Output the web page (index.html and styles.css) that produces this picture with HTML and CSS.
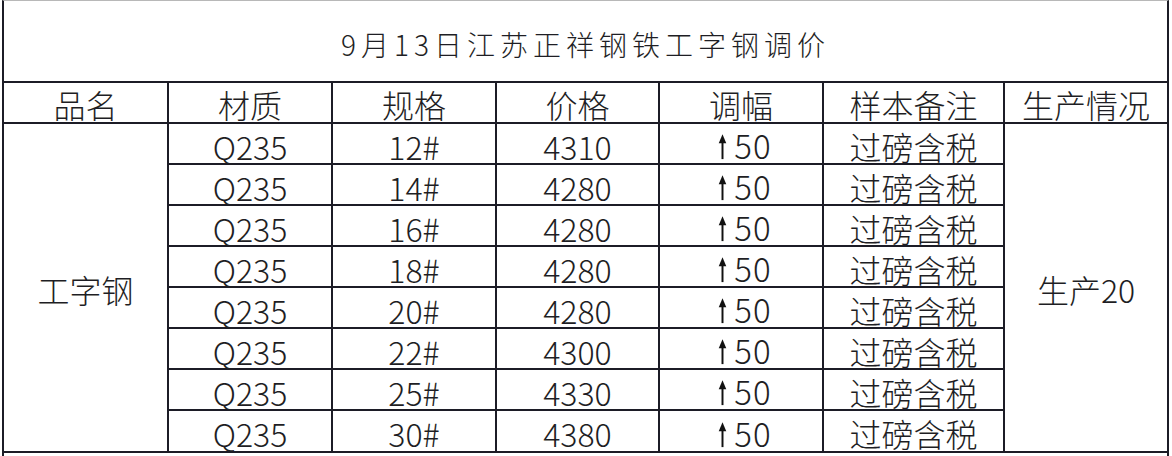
FILE: index.html
```html
<!DOCTYPE html>
<html lang="zh-CN">
<head>
<meta charset="utf-8">
<title>9月13日江苏正祥钢铁工字钢调价</title>
<link rel="stylesheet" href="styles.css">
</head>
<body>
<div class="frame">
  <div class="table-wrap">
    <table class="price">
      <colgroup>
        <col class="c1"><col class="c2"><col class="c3"><col class="c4"><col class="c5"><col class="c6"><col class="c7">
      </colgroup>
      <tr class="title-row"><td colspan="7" class="title">9月13日江苏正祥钢铁工字钢调价</td></tr>
      <tr class="head-row">
        <td>品名</td><td>材质</td><td>规格</td><td>价格</td><td>调幅</td><td>样本备注</td><td>生产情况</td>
      </tr>
      <tr class="row">
        <td rowspan="8" class="merged">工字钢</td>
        <td>Q235</td><td>12#</td><td>4310</td>
        <td><span class="chg"><svg class="up" viewBox="0 0 10 28" width="9" height="27"><path d="M5 8V28" stroke="#111" stroke-width="2.2"/><path d="M0.8 10.5L5 0.5L9.2 10.5Z" fill="#111"/></svg><span class="amt">50</span></span></td>
        <td>过磅含税</td>
        <td rowspan="8" class="merged">生产20</td>
      </tr>
      <tr class="row"><td>Q235</td><td>14#</td><td>4280</td><td><span class="chg"><svg class="up" viewBox="0 0 10 28" width="9" height="27"><path d="M5 8V28" stroke="#111" stroke-width="2.2"/><path d="M0.8 10.5L5 0.5L9.2 10.5Z" fill="#111"/></svg><span class="amt">50</span></span></td><td>过磅含税</td></tr>
      <tr class="row"><td>Q235</td><td>16#</td><td>4280</td><td><span class="chg"><svg class="up" viewBox="0 0 10 28" width="9" height="27"><path d="M5 8V28" stroke="#111" stroke-width="2.2"/><path d="M0.8 10.5L5 0.5L9.2 10.5Z" fill="#111"/></svg><span class="amt">50</span></span></td><td>过磅含税</td></tr>
      <tr class="row"><td>Q235</td><td>18#</td><td>4280</td><td><span class="chg"><svg class="up" viewBox="0 0 10 28" width="9" height="27"><path d="M5 8V28" stroke="#111" stroke-width="2.2"/><path d="M0.8 10.5L5 0.5L9.2 10.5Z" fill="#111"/></svg><span class="amt">50</span></span></td><td>过磅含税</td></tr>
      <tr class="row"><td>Q235</td><td>20#</td><td>4280</td><td><span class="chg"><svg class="up" viewBox="0 0 10 28" width="9" height="27"><path d="M5 8V28" stroke="#111" stroke-width="2.2"/><path d="M0.8 10.5L5 0.5L9.2 10.5Z" fill="#111"/></svg><span class="amt">50</span></span></td><td>过磅含税</td></tr>
      <tr class="row"><td>Q235</td><td>22#</td><td>4300</td><td><span class="chg"><svg class="up" viewBox="0 0 10 28" width="9" height="27"><path d="M5 8V28" stroke="#111" stroke-width="2.2"/><path d="M0.8 10.5L5 0.5L9.2 10.5Z" fill="#111"/></svg><span class="amt">50</span></span></td><td>过磅含税</td></tr>
      <tr class="row"><td>Q235</td><td>25#</td><td>4330</td><td><span class="chg"><svg class="up" viewBox="0 0 10 28" width="9" height="27"><path d="M5 8V28" stroke="#111" stroke-width="2.2"/><path d="M0.8 10.5L5 0.5L9.2 10.5Z" fill="#111"/></svg><span class="amt">50</span></span></td><td>过磅含税</td></tr>
      <tr class="row"><td>Q235</td><td>30#</td><td>4380</td><td><span class="chg"><svg class="up" viewBox="0 0 10 28" width="9" height="27"><path d="M5 8V28" stroke="#111" stroke-width="2.2"/><path d="M0.8 10.5L5 0.5L9.2 10.5Z" fill="#111"/></svg><span class="amt">50</span></span></td><td>过磅含税</td></tr>
    </table>
  </div>
</div>
</body>
</html>
```
FILE: styles.css
```css
* { box-sizing: border-box; }
html, body {
  margin: 0;
  padding: 0;
  background: #ffffff;
}
body {
  font-family: "Noto Sans CJK SC", "Noto Sans", sans-serif;
  font-weight: 300;
  color: #1e1e24;
}
.frame {
  margin-left: 2px;
  width: 1167px;
  height: 456px;
  border-left: 2px solid #1c1c26;
  border-right: 2px solid #1c1c26;
  border-top: 1px solid #b8b8b8;
}
.table-wrap {
  border-bottom: 2px solid #1c1c26;
}
.price {
  width: 100%;
  table-layout: fixed;
  border-collapse: collapse;
  border-style: hidden;
}
.c1 { width: 164px; }
.c2 { width: 164px; }
.c3 { width: 164px; }
.c4 { width: 163px; }
.c5 { width: 164px; }
.c6 { width: 181px; }
.c7 { width: 163px; }
.price td {
  border: 2px solid #1c1c26;
  padding: 0;
  text-align: center;
  vertical-align: middle;
  line-height: 1;
  font-size: 32px;
  white-space: nowrap;
}
.title-row { height: 81px; }
.price td.title {
  font-size: 28px;
  letter-spacing: 5px;
  padding-top: 6px;
}
.head-row { height: 41px; }
.head-row td { padding-top: 2px; }
.row { height: 41px; }
.row td { padding-top: 4px; }
.price td.merged { padding-top: 2px; }
.chg {
  display: inline-flex;
  align-items: flex-end;
  gap: 7px;
  margin-left: 8px;
}
.up {
  display: block;
  margin-bottom: 2px;
}
.amt {
  font-size: 33px;
  line-height: 1;
  letter-spacing: 1px;
}
```
